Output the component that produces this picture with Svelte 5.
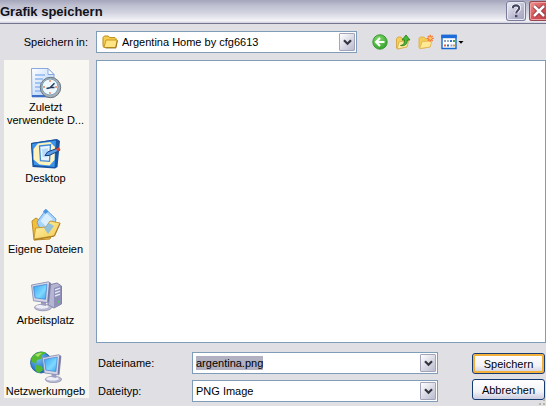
<script>
  import { onMount } from 'svelte';

  const places = [
    { id: 'recent', label: 'Zuletzt verwendete D...' },
    { id: 'desktop', label: 'Desktop' },
    { id: 'documents', label: 'Eigene Dateien' },
    { id: 'computer', label: 'Arbeitsplatz' },
    { id: 'network', label: 'Netzwerkumgeb' }
  ];

  let fileName = $state('argentina.png');
  let nameInput;

  onMount(() => {
    nameInput.focus();
    nameInput.select();
  });
</script>

{#snippet chevron()}
  <svg width="9" height="7" viewBox="0 0 9 7" aria-hidden="true">
    <path d="M1 1.2 4.5 4.7 8 1.2" fill="none" stroke="#33343e" stroke-width="2.2" />
  </svg>
{/snippet}

{#snippet monitor()}
  <ellipse cx="13" cy="27.5" rx="8.5" ry="3.3" fill="#b9bad2" stroke="#8586a8" stroke-width=".7" />
  <ellipse cx="12" cy="26.7" rx="6.5" ry="2" fill="#eeeef8" />
  <path d="m11 20 5 1v5l-5-1z" fill="#9a9cc0" />
  <path d="m1.5 5 17-3.2 2.3 1.4-2 19.6-15.3-2z" fill="#d5d6e8" stroke="#8485ac" stroke-width=".8" />
  <path d="m19 2.5 1.8.8-2 19-1.6-.6z" fill="#7577a4" />
  <path d="m3.5 6.7 13.4-2.4-1.4 15-10.5-1.5z" fill="url(#screen)" stroke="#3b7fce" stroke-width=".7" />
{/snippet}

<div class="dialog">
  <header class="titlebar">
    <h1>Grafik speichern</h1>
    <button class="caption" type="button" aria-label="Hilfe">
      <svg width="20" height="20" viewBox="0 0 20 20">
        <path d="M6.8 7.3C6.8 3.3 13.3 3.5 13.2 7.1c0 2.5-3 2.5-3 5.4" fill="none" stroke="#fff" stroke-width="3.8" />
        <path d="M6.8 7.3C6.8 3.3 13.3 3.5 13.2 7.1c0 2.5-3 2.5-3 5.4" fill="none" stroke="#444663" stroke-width="2.1" />
        <path d="M9 14h2.4v2.3H9z" fill="#444663" />
      </svg>
    </button>
    <button class="caption close" type="button" aria-label="Schließen">
      <svg width="20" height="20" viewBox="0 0 20 20">
        <path d="m5 5 10 10M15 5 5 15" stroke="#7d2836" stroke-width="4" />
        <path d="m5 5 10 10M15 5 5 15" stroke="#fff" stroke-width="2.6" />
      </svg>
    </button>
  </header>

  <div class="toolbar">
    <label for="folder">Speichern in:</label>
    <div class="combo folder">
      <svg class="folder-icon" width="16" height="14" viewBox="0 0 16 14" aria-hidden="true">
        <path d="M1 11V2.5L2.3 1h4l1.4 1.6H13l1 1V11l-1 1.5H2z" fill="#f5ce50" stroke="#b98a18" />
        <path d="M2 12.5 4 5h11.2l-1.6 7.5z" fill="#ffe583" stroke="#c9981f" />
        <path d="M3.5 13h10.4L15.5 5.5" fill="none" stroke="#8f6a15" stroke-width=".8" />
      </svg>
      <select id="folder"><option>Argentina Home by cfg6613</option></select>
      <span class="drop">{@render chevron()}</span>
    </div>
    <div class="tools">
      <button type="button" aria-label="Zurück">
        <svg width="16" height="16" viewBox="0 0 16 16">
          <circle cx="8" cy="8" r="7.2" fill="url(#green)" stroke="#2f9428" stroke-width=".9" />
          <path d="M12.5 8H4.5M8 4 4 8l4 4" fill="none" stroke="#fff" stroke-width="2" />
        </svg>
      </button>
      <button type="button" aria-label="Eine Ebene nach oben">
        <svg width="16" height="16" viewBox="0 0 16 16">
          <path d="M1.5 14V4.5L3 3h3l1 1.5 5 .5v7.5L3 15z" fill="#f4ce59" stroke="#cfa137" stroke-width=".8" />
          <path d="m2 15 2.2-7.2 9.5-1.3L12 13z" fill="#ffeb9e" stroke="#d7ab43" stroke-width=".8" />
          <path d="M5.5 11.5c3.3-.3 4-2.8 4-5.5H7l4-5 4 5h-2.6c0 4-2.4 6.5-6.9 5.5z" fill="#48ba35" stroke="#24781d" stroke-width=".8" />
        </svg>
      </button>
      <button type="button" aria-label="Neuen Ordner erstellen">
        <svg width="16" height="16" viewBox="0 0 16 16">
          <path d="M1 13.5V4.5L2.2 3H6l1.3 1.6 4.7.4V13L2 14.5z" fill="#f5cc57" stroke="#dba941" stroke-width=".8" />
          <path d="m1.6 14.5 2.6-7 9.8-.6-2 6.2z" fill="#ffe995" stroke="#dfb34d" stroke-width=".8" />
          <path d="M12.3.8v7M8.8 4.3h7M9.9 1.9l4.8 4.8M14.7 1.9 9.9 6.7" stroke="#f3783d" stroke-width="1.3" />
          <circle cx="12.3" cy="4.3" r="1.4" fill="#ffd05a" />
        </svg>
      </button>
      <button type="button" aria-label="Ansicht">
        <svg width="23" height="16" viewBox="0 0 23 16">
          <path d="M1 1.5h14v13H1z" fill="#fff" stroke="#1767d2" stroke-width="1.4" />
          <path d="M.3.8h15.4v3.4H.3z" fill="#1d6bd8" />
          <path d="M3 6h2v2H3zM9.5 10.5h2v2h-2z" fill="#8fa0b5" />
          <path d="M6 6h2v2H6z" fill="#9cacc4" />
          <path d="M9 6h2v2H9z" fill="#3d6fd0" />
          <path d="M12 6h2v2h-2z" fill="#41a64a" />
          <path d="M3 10.5h2v2H3z" fill="#e2663a" />
          <path d="M6 10.5h2v2H6z" fill="#3e62bb" />
          <path d="M12 10.5h2v2h-2z" fill="#d8a339" />
          <path d="M17.5 7h5L20 9.8z" fill="#000" />
        </svg>
      </button>
    </div>
  </div>

  <div class="body">
    <nav class="places">
      {#each places as place (place.id)}
        <button type="button" class="place">
          <svg width="32" height="32" viewBox="0 0 32 32" aria-hidden="true">
            {#if place.id === 'recent'}
              <path d="M1.5 1.5H18l6 6V30h-22z" fill="url(#paper)" stroke="#87a9df" />
              <path d="M18 1.5v6h6z" fill="#fff" stroke="#87a9df" />
              <path d="M5 8h10M5 12h8M5 16h6M5 20h5M5 24h6" stroke="#8eb5ef" stroke-width="1.3" />
              <path d="M2 29h22" stroke="#3c70c8" stroke-width="2" />
              <circle cx="20.5" cy="20.5" r="10.2" fill="#a9b0b8" stroke="#68747f" stroke-width="1" />
              <circle cx="20" cy="20" r="8" fill="#eef9ff" stroke="#6896ad" stroke-width=".8" />
              <path d="M20 13v2M20 25v2M13 20h2M25 20h2" stroke="#ee8357" stroke-width="1.4" />
              <path d="m16.5 21.5 3.5-.8 4.5-4.5M20 20.5h4.5" fill="none" stroke="#253c5c" stroke-width="1.5" />
            {:else if place.id === 'desktop'}
              <path d="m1 5 26-4 3 2-2.5 26-2.5 1.5L2.5 29z" fill="#1455a8" />
              <path d="m1.5 5.5 25-3.7-1.4 27.7-21.6-2z" fill="#3c94eb" stroke="#19529d" />
              <path d="m8 5.5 12-1.5 5 5-.5 13-5 5.5-10-1-6-5V11z" fill="#fff2bc" />
              <path d="m9.5 8 11-1.2-1 16.5-9-.6z" fill="#e7f4ff" stroke="#4089d8" stroke-width="1.3" />
              <path d="m12 11 6-.7-.5 9-5-.2z" fill="#b6dbfb" />
              <path d="m15 17.5 2.5-3.5L28 10l1.5 2.5-10.5 5z" fill="#5c9fe8" stroke="#173f80" />
              <path d="m26 10.7 3-1.4 1.5 2.8-3 1.5z" fill="#df3d25" />
            {:else if place.id === 'documents'}
              <path d="m2 12 4-3 3 2 16 3-5 16-16 1z" fill="#f2bf3d" stroke="#be8b27" />
              <path d="m7 13 9-12.5L26 10l-3 13-11 1z" fill="#a8d3fb" stroke="#65a3df" />
              <path d="m10.500 12 6-8 6 6-5 9z" fill="#d9efff" />
              <path d="M13 2.500 15.500 0l3 2.500-3 2.500z" fill="#4b96e2" />
              <path d="m4 30 1.500-11L16 18l4-6 10 2-6 13z" fill="url(#gold)" stroke="#c89b30" />
              <path d="m14 19 4 6 6-8-5-3z" fill="#78b9ee" opacity=".8" />
              <path d="m4 31 20.500-4L30 14.500" fill="none" stroke="#a77b28" />
            {:else if place.id === 'computer'}
              <path d="m19 5 8-2 4.5 3v18l-7.5 4-6-3z" fill="#b5b5d2" stroke="#8081a7" />
              <path d="m24 8 7-2.5V24l-7 3.5z" fill="#8f90b8" />
              <path d="m25 10 5-1.8M25 13l5-1.8M25 16l5-1.8" stroke="#e4e4f3" stroke-width="1.4" />
              <path d="m28 21 2-.7v2l-2 .8z" fill="#57ce61" />
              {@render monitor()}
            {:else}
              <circle cx="11" cy="11.5" r="10.5" fill="url(#globe)" stroke="#155a9e" stroke-width=".8" />
              <path d="M2 6C6 0 14 0 16 2l-4 2-1 4-4 1-1 4-4-2zm4 8 6 1 1 4-4 3c-3-1-5-4-3-8z" fill="#55b832" />
              <path d="M5 4c3-2 5-2 7-2L8 6z" fill="#a6e067" />
              <g transform="translate(11 2) scale(.96)">{@render monitor()}</g>
            {/if}
          </svg>
          <span>{place.label}</span>
        </button>
      {/each}
    </nav>

    <main>
      <div class="files" role="listbox" aria-label="Dateien" tabindex="-1"></div>
      <form class="fields" onsubmit={(e) => e.preventDefault()}>
        <div class="inputs">
          <label for="name">Dateiname:</label>
          <div class="combo">
            <input id="name" type="text" bind:value={fileName} bind:this={nameInput} autocomplete="off" />
            <button class="drop" type="button" aria-label="Zuletzt verwendete Namen">{@render chevron()}</button>
          </div>
          <label for="type">Dateityp:</label>
          <div class="combo">
            <select id="type"><option>PNG Image</option></select>
            <span class="drop">{@render chevron()}</span>
          </div>
        </div>
        <div class="actions">
          <button class="default" type="submit">Speichern</button>
          <button type="button">Abbrechen</button>
        </div>
      </form>
    </main>
  </div>

  <svg class="grip" width="8" height="8" viewBox="0 0 8 8" aria-hidden="true">
    <path d="M5 1h2v2H5zM1 5h2v2H1zM5 5h2v2H5z" fill="#b8b4a8" />
  </svg>

  <svg class="defs" width="0" height="0" aria-hidden="true">
    <defs>
      <linearGradient id="screen" x1="0" y1="0" x2="1" y2="1">
        <stop offset="0" stop-color="#35a4f2" /><stop offset=".6" stop-color="#7fd8ff" /><stop offset="1" stop-color="#39a5ef" />
      </linearGradient>
      <linearGradient id="paper" x1="0" y1="0" x2="1" y2="1">
        <stop offset="0" stop-color="#fff" /><stop offset="1" stop-color="#a8cbf7" />
      </linearGradient>
      <linearGradient id="gold" x1="0" y1="0" x2="1" y2="1">
        <stop offset="0" stop-color="#fff5b2" /><stop offset="1" stop-color="#f3c94c" />
      </linearGradient>
      <radialGradient id="green" cx=".4" cy=".3" r=".8">
        <stop offset="0" stop-color="#83da6c" /><stop offset="1" stop-color="#2d9e25" />
      </radialGradient>
      <radialGradient id="globe" cx=".35" cy=".3" r=".8">
        <stop offset="0" stop-color="#72c4fa" /><stop offset="1" stop-color="#0b56b0" />
      </radialGradient>
    </defs>
  </svg>
</div>

<style>
  :global(body) {
    background: #e0dfe3;
  }

  .dialog {
    position: relative;
    display: flex;
    flex-direction: column;
    box-sizing: border-box;
    min-height: 100vh;
    padding-bottom: 4px;
    overflow: hidden;
    background: #e0dfe3;
    color: #000;
    font: 11px/14px "Liberation Sans", Arial, sans-serif;
  }

  button,
  input,
  select {
    box-sizing: border-box;
    margin: 0;
    padding: 0;
    border: 0;
    border-radius: 0;
    background: none;
    color: inherit;
    font: inherit;
    outline: 0;
  }

  svg {
    display: block;
    flex: none;
  }

  .titlebar {
    display: flex;
    gap: 3px;
    box-sizing: border-box;
    height: 24px;
    margin-right: -3px;
    padding-top: 1px;
    border-bottom: 1px solid #75758f;
    background: linear-gradient(#a4a5bb, #bfc0d0 25%, #d2d3df 55%, #f4f4f8 90%, #d0d0dc);
  }

  h1 {
    flex: 1;
    margin: 0;
    color: #111118;
    font: bold 13px/21px "Liberation Sans", Arial, sans-serif;
  }

  .caption {
    width: 20px;
    height: 20px;
    overflow: hidden;
    border-radius: 3px;
    background: linear-gradient(135deg, #f4f4fa, #b8b9cf 60%, #9c9db9);
    box-shadow: inset 0 0 0 1px #7b7c9c, inset 0 0 0 2px #e8e8f2;
  }

  .close {
    background: linear-gradient(135deg, #f3a09a, #d65357 50%, #b83d48);
    box-shadow: inset 0 0 0 1px #9a4552, inset 0 0 0 2px #eba3a3;
  }

  .toolbar {
    display: flex;
    align-items: center;
    padding: 7px 0 7px 4px;
  }

  .toolbar label {
    width: 84px;
    margin-right: 8px;
    text-align: right;
  }

  .combo {
    display: flex;
    position: relative;
    box-sizing: border-box;
    height: 22px;
    border: 1px solid #7f9db9;
    background: #fff;
  }

  .folder {
    flex: 0 1 261px;
  }

  .combo select,
  .combo input {
    flex: 1;
    min-width: 0;
    padding: 0 20px 0 3px;
    appearance: none;
  }

  .combo .folder-icon {
    position: absolute;
    top: 3px;
    left: 5px;
    pointer-events: none;
  }

  .folder select {
    padding-left: 25px;
  }

  input::selection {
    background: rgba(176, 176, 192, 0.99);
    color: #000;
  }

  .drop {
    display: flex;
    position: absolute;
    top: 1px;
    right: 1px;
    bottom: 1px;
    align-items: center;
    justify-content: center;
    box-sizing: border-box;
    width: 16px;
    border: 1px solid #a3a4ba;
    border-radius: 1px;
    background: linear-gradient(135deg, #fff, #dcdce7 50%, #b9bacd);
    pointer-events: none;
  }

  button.drop {
    pointer-events: auto;
  }

  .tools {
    display: flex;
    gap: 7px;
    margin-left: 15px;
  }

  .body {
    display: flex;
    flex: 1;
    gap: 7px;
    padding-left: 4px;
  }

  .places {
    box-sizing: border-box;
    width: 85px;
    flex: none;
    margin-bottom: 4px;
    padding-top: 7px;
    background: #f8f7f2;
  }

  .place {
    display: flex;
    flex-direction: column;
    align-items: center;
    gap: 2px;
    width: 100%;
    height: 71px;
    padding-right: 2px;
    line-height: 13px;
  }

  .place:last-child {
    height: auto;
  }

  main {
    display: flex;
    flex: 1;
    flex-direction: column;
    min-width: 0;
  }

  .files {
    flex: 1;
    border: 1px solid #7f9db9;
    background: #fff;
  }

  .fields {
    display: flex;
    gap: 34px;
    padding: 9px 1px 0 2px;
  }

  .inputs {
    display: grid;
    flex: 1;
    grid-template-columns: 94px minmax(0, 1fr);
    row-gap: 6px;
    align-items: center;
  }

  .actions {
    display: flex;
    flex-direction: column;
    gap: 5px;
    width: 73px;
    padding-top: 1px;
  }

  .actions button {
    height: 21px;
    border: 1px solid #153b73;
    border-radius: 3px;
    background: linear-gradient(#fff, #f3f3f8 60%, #cccddf);
  }

  .actions .default {
    box-shadow: inset 0 0 0 2px #f3b13c;
  }

  .grip {
    position: absolute;
    right: 0;
    bottom: 0;
  }

  .defs {
    position: absolute;
  }
</style>
